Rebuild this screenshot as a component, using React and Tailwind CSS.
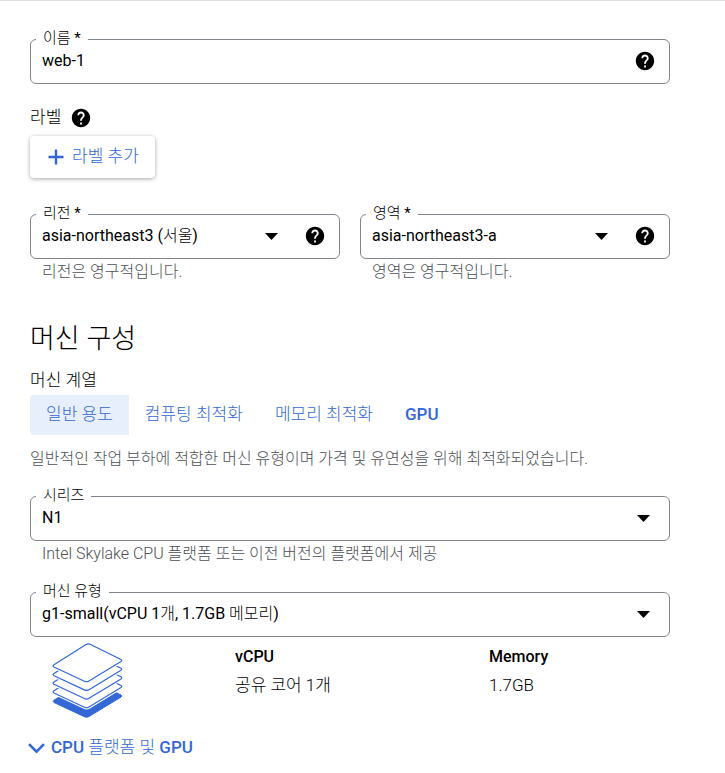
import { useState } from 'react'
import { MdHelp } from 'react-icons/md'

const FAMILIES = ['일반 용도', '컴퓨팅 최적화', '메모리 최적화', 'GPU']

const SHEET = 'M2 21.700 L34 1.600 Q36.300 0.300 38.600 1.500 L69 16.500 Q70.500 17.500 69 18.600 L37 38 Q34.700 39.400 32.400 38.200 L2 24 Q0.200 22.900 2 21.700Z'

function HelpButton({ label }) {
  return (
    <button type="button" aria-label={label} className="shrink-0 text-black">
      <MdHelp className="w-[22px] h-[22px]" />
    </button>
  )
}

function StackIcon() {
  // drawn bottom to top, each sheet keeps a white gap to the one below
  const sheets = [26, 17.3, 8.7, 0]
  return (
    <svg className="w-[71px] h-[76px]" viewBox="0 0 71 76" strokeLinejoin="round">
      <path d={SHEET} transform="translate(0 35.5)" fill="#3367d6" stroke="#3367d6" strokeWidth="1" />
      {sheets.map(y => (
        <g key={y} transform={`translate(0 ${y})`}>
          <path d={SHEET} fill="#fff" stroke="#fff" strokeWidth="3.4" />
          <path d={SHEET} fill="none" stroke="#3367d6" strokeWidth="1.2" />
        </g>
      ))}
    </svg>
  )
}

function Field({ id, label, help, hint, children }) {
  return (
    <div className="min-w-0">
      <fieldset className="min-w-0 border border-[#80868b] rounded-md pb-[10px]">
        <legend className="ml-[5px] px-[7px] pb-[2px] text-[15px] leading-[18px]">
          <label htmlFor={id}>{label}</label>
        </legend>
        <div className="flex items-center h-6 pl-[11px] pr-[13px]">
          {children}
          {help && <HelpButton label={help} />}
        </div>
      </fieldset>
      {hint && <p className="mt-[3px] pl-3 text-base leading-5 font-light text-[#4d5156]">{hint}</p>}
    </div>
  )
}

function SelectField({ id, label, help, hint, options }) {
  return (
    <Field id={id} label={label} help={help} hint={hint}>
      <div className={`grid flex-1 min-w-0 items-center ${help ? 'mr-5' : ''}`}>
        <select id={id} className="col-start-1 row-start-1 w-full h-6 appearance-none bg-transparent outline-none">
          {options.map(o => <option key={o}>{o}</option>)}
        </select>
        <svg
          className="col-start-1 row-start-1 justify-self-end w-[13px] h-[7px] mr-[6px] pointer-events-none"
          viewBox="0 0 13 7"
        >
          <path d="M0 0h13L6.500 7z" />
        </svg>
      </div>
    </Field>
  )
}

export default function App() {
  const [name, setName] = useState('web-1')
  const [family, setFamily] = useState(FAMILIES[0])

  return (
    <main className="border-t border-[#dadce0] bg-white pt-7 pb-4 pl-[30px] pr-[55px] text-base text-black font-[Roboto,'Noto_Sans_CJK_KR_Light','Noto_Sans_CJK_KR',sans-serif]">
      <Field id="name" label="이름 *" help="이름 도움말">
        <input
          id="name"
          value={name}
          onChange={e => setName(e.target.value)}
          className="flex-1 min-w-0 h-6 bg-transparent outline-none"
        />
      </Field>

      <div className="flex items-center gap-[9px] h-5 mt-6 text-[17px]">
        <span>라벨</span>
        <HelpButton label="라벨 도움말" />
      </div>
      <button
        type="button"
        className="flex items-center gap-2 h-[42px] mt-2 pl-[18px] pr-4 rounded-[4px] text-[17px] text-[#3367d6] shadow-[0_1px_4px_rgba(0,0,0,0.35)]"
      >
        <svg className="w-4 h-4" viewBox="0 0 16 16" fill="none" stroke="currentColor" strokeWidth="2.4">
          <path d="M8 0.500v15M0.500 8h15" />
        </svg>
        라벨 추가
      </button>

      <div className="grid grid-cols-2 gap-5 mt-[26px]">
        <SelectField
          id="region"
          label="리전 *"
          help="리전 도움말"
          hint="리전은 영구적입니다."
          options={['asia-northeast3 (서울)']}
        />
        <SelectField
          id="zone"
          label="영역 *"
          help="영역 도움말"
          hint="영역은 영구적입니다."
          options={['asia-northeast3-a']}
        />
      </div>

      <h2 className="mt-[39px] text-[27px] leading-9">머신 구성</h2>
      <h3 className="mt-[11px] text-[17px] leading-6">머신 계열</h3>
      <div role="tablist" className="flex mt-[3px]">
        {FAMILIES.map(f => (
          <button
            key={f}
            type="button"
            role="tab"
            aria-selected={f === family}
            onClick={() => setFamily(f)}
            className={`h-10 px-4 rounded-l-[4px] text-[17px] font-medium text-[#3367d6] ${f === family ? 'bg-[#e8effc]' : ''}`}
          >
            {f}
          </button>
        ))}
      </div>
      <p className="mt-3 leading-6 font-light text-[#4d5156]">
        일반적인 작업 부하에 적합한 머신 유형이며 가격 및 유연성을 위해 최적화되었습니다.
      </p>

      <div className="mt-[15px]">
        <SelectField
          id="series"
          label="시리즈"
          hint="Intel Skylake CPU 플랫폼 또는 이전 버전의 플랫폼에서 제공"
          options={['N1']}
        />
      </div>
      <div className="mt-[18px]">
        <SelectField id="machine-type" label="머신 유형" options={['g1-small(vCPU 1개, 1.7GB 메모리)']} />
      </div>

      <div className="grid grid-cols-[205fr_254fr_181fr] mt-[6px]">
        <div className="pl-[22px]">
          <StackIcon />
        </div>
        <dl>
          <dt className="leading-7 font-medium">vCPU</dt>
          <dd className="mt-[2px] text-[17px] leading-6 font-light">공유 코어 1개</dd>
        </dl>
        <dl>
          <dt className="leading-7 font-medium">Memory</dt>
          <dd className="mt-[2px] text-[17px] leading-6 font-light">1.7GB</dd>
        </dl>
      </div>

      <button type="button" className="flex items-center gap-[6px] h-6 mt-[17px] -ml-[2px] text-[17px] font-medium text-[#3367d6]">
        <svg className="w-[17px] h-[11px]" viewBox="0 0 17 11" fill="none" stroke="currentColor" strokeWidth="2.6">
          <path d="M1 1.200l7.500 7.500L16 1.200" />
        </svg>
        CPU 플랫폼 및 GPU
      </button>
    </main>
  )
}
